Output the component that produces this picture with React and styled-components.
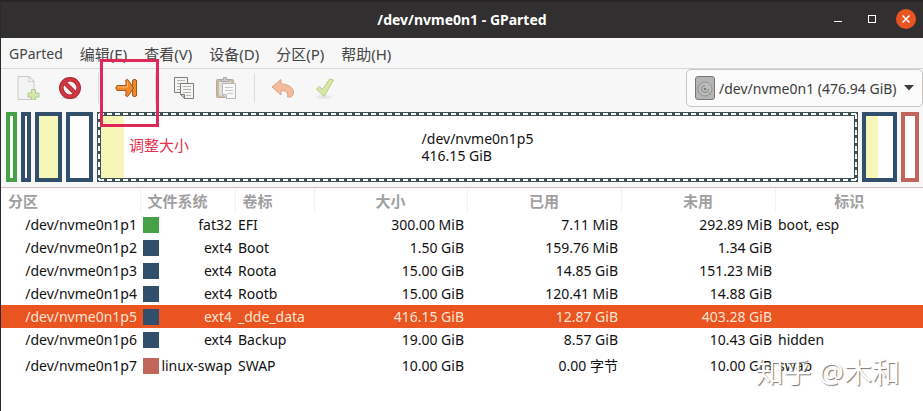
import React, { useState } from 'react';
import styled, { createGlobalStyle } from 'styled-components';

const GlobalStyle = createGlobalStyle`
  * {
    box-sizing: border-box;
  }

  body {
    margin: 0;
    background: #fff;
    color: #111;
    font-family: 'Noto Sans', 'Noto Sans CJK SC', sans-serif;
    font-size: 14px;
  }

  button, select {
    font: inherit;
    color: inherit;
    border: none;
    background: none;
    padding: 0;
  }
`;

// Styled Components
const Window = styled.div`
  min-height: 100vh;
  border-left: 1px solid #2b2a2a;
  overflow: hidden;
`;

const TitleBar = styled.header`
  display: grid;
  grid-template-columns: 1fr auto 1fr;
  align-items: center;
  height: 38px;
  background: #312f30;
  box-shadow: inset 0 2px #262425;
`;

const Title = styled.h1`
  grid-column: 2;
  margin: 0;
  font-size: 14px;
  font-weight: 700;
  color: #fff;
`;

const WindowControls = styled.div`
  display: flex;
  justify-content: flex-end;
  gap: 14px;
  padding-right: 7px;
`;

const ControlButton = styled.button`
  display: flex;
  align-items: center;
  justify-content: center;
  width: 20px;
  height: 20px;
  border-radius: 50%;
  background: ${(props) => (props.$close ? '#e95420' : 'transparent')};
`;

const MenuBar = styled.nav`
  display: flex;
  align-items: center;
  gap: 17px;
  height: 31px;
  padding: 2px 8px 0;
  background: #f7f7f7;
  border-bottom: 1px solid #d9d8d8;
`;

const MenuItem = styled.button`
  font-size: ${(props) => (props.$latin ? 14 : 15)}px;
  line-height: 24px;
  color: #454545;
`;

const Toolbar = styled.div`
  display: flex;
  align-items: center;
  gap: 2px;
  height: 38px;
  padding-left: 7px;
  background: #f7f7f7;
`;

const ToolButton = styled.button`
  position: relative;
  display: flex;
  align-items: center;
  justify-content: center;
  width: 40px;
  height: 36px;

  &:disabled svg {
    opacity: 0.55;
  }
`;

const ToolSeparator = styled.span`
  width: 1px;
  height: 30px;
  margin: 0 6px;
  background: #dedddd;
`;

const Highlight = styled.span`
  position: absolute;
  top: -11px;
  left: -7px;
  z-index: 1;
  width: 59px;
  height: 68px;
  border: 3px solid #e02858;
  pointer-events: none;
`;

const DevicePicker = styled.label`
  display: flex;
  align-items: center;
  gap: 4px;
  height: 38px;
  margin-left: auto;
  padding: 0 8px;
  border: 1px solid #c8c5c3;
  border-radius: 5px;
  background: #fbfbfb;
`;

const DeviceSelect = styled.select`
  appearance: none;
  width: 181px;
  font-size: 14px;
  color: #3d3d3d;
`;

const DiskMap = styled.div`
  display: flex;
  gap: 4px;
  height: 81px;
  padding: 5px 4px 5px 5px;
  background: #f7f7f7;
  border-bottom: 1px solid #cdbfc4;
`;

const Block = styled.div`
  position: relative;
  display: flex;
  flex: ${(props) => props.$weight} 1 0;
  min-width: 0;
  border: 4px solid ${(props) => props.$color};
  background: #fff;
`;

const Used = styled.div`
  height: 100%;
  background: #f6f6b8;
`;

const SelectionDashes = styled.svg`
  position: absolute;
  top: -4px;
  left: -4px;
  width: calc(100% + 8px);
  height: calc(100% + 8px);
`;

const BlockLabel = styled.div`
  position: absolute;
  inset: 0;
  display: flex;
  align-items: center;
  justify-content: center;
  font-size: 14px;
  line-height: 17px;
`;

const Note = styled.span`
  position: absolute;
  top: 18px;
  left: 28px;
  font-size: 15px;
  line-height: 22px;
  color: #e5304f;
`;

const PartitionTable = styled.table`
  width: 100%;
  table-layout: fixed;
  border-collapse: collapse;
`;

const HeadCell = styled.th`
  height: 25px;
  padding: 0 7px;
  border-right: 1px solid #f3f1f1;
  font-size: 15px;
  font-weight: 700;
  line-height: 22px;
  text-align: ${(props) => props.$align || 'left'};
  color: #a09f9f;

  &:last-child {
    border-right: none;
  }
`;

const Row = styled.tr`
  height: ${(props) => (props.$tall ? 30 : 23)}px;
  background: ${(props) => (props.$selected ? '#e95420' : '#fff')};
  color: ${(props) => (props.$selected ? '#fde3d5' : '#111')};
`;

const Cell = styled.td`
  padding: 0 3px;
  line-height: 22px;
  text-align: ${(props) => props.$align || 'left'};
  white-space: nowrap;
`;

const FileSystem = styled.div`
  display: flex;
  align-items: center;
  justify-content: space-between;
`;

const Swatch = styled.span`
  width: 16px;
  height: 16px;
  background: ${(props) => props.$color};
`;

const Watermark = styled.div`
  position: absolute;
  top: 350px;
  right: 23px;
  font-size: 28px;
  line-height: 44px;
  color: #fff;
  text-shadow: 1px 1px 1px #7a7a7a;
  pointer-events: none;
`;

const COLORS = { fat32: '#46a046', ext4: '#314e6c', 'linux-swap': '#c1665a' };

const partitions = [
  { name: '/dev/nvme0n1p1', fs: 'fat32', label: 'EFI', size: '300.00 MiB', used: '7.11 MiB', unused: '292.89 MiB', flags: 'boot, esp', weight: 3, fill: 0 },
  { name: '/dev/nvme0n1p2', fs: 'ext4', label: 'Boot', size: '1.50 GiB', used: '159.76 MiB', unused: '1.34 GiB', flags: '', weight: 2, fill: 0 },
  { name: '/dev/nvme0n1p3', fs: 'ext4', label: 'Roota', size: '15.00 GiB', used: '14.85 GiB', unused: '151.23 MiB', flags: '', weight: 19, fill: 99 },
  { name: '/dev/nvme0n1p4', fs: 'ext4', label: 'Rootb', size: '15.00 GiB', used: '120.41 MiB', unused: '14.88 GiB', flags: '', weight: 19, fill: 0 },
  { name: '/dev/nvme0n1p5', fs: 'ext4', label: '_dde_data', size: '416.15 GiB', used: '12.87 GiB', unused: '403.28 GiB', flags: '', weight: 753, fill: 3 },
  { name: '/dev/nvme0n1p6', fs: 'ext4', label: 'Backup', size: '19.00 GiB', used: '8.57 GiB', unused: '10.43 GiB', flags: 'hidden', weight: 27, fill: 45 },
  { name: '/dev/nvme0n1p7', fs: 'linux-swap', label: 'SWAP', size: '10.00 GiB', used: '0.00 字节', unused: '10.00 GiB', flags: 'swap', weight: 10, fill: 0 },
];

const menus = ['GParted', '编辑(E)', '查看(V)', '设备(D)', '分区(P)', '帮助(H)'];

const NewIcon = () => (
  <svg width="24" height="24" viewBox="0 0 24 24">
    <path d="M2 .5h11l5 5v18H2z" fill="#f1f1f0" stroke="#a5a7a2" />
    <path d="M13 .5q1 3-.5 5.500 3-1 5.500-.5z" fill="#fff" stroke="#a5a7a2" />
    <path d="M15.500 13.500h4v3.500h3.500v4h-3.500v3h-4v-3H12v-4h3.500z" fill="#b5dc72" stroke="#7ba03a" />
  </svg>
);

const DeleteIcon = () => (
  <svg width="24" height="24" viewBox="0 0 24 24">
    <ellipse cx="12" cy="22" rx="9" ry="1.500" fill="#ddd" />
    <circle cx="12" cy="12" r="8.700" fill="#f5eeee" stroke="#a8202a" strokeWidth="4.500" />
    <path d="M6 6l12 12" stroke="#a8202a" strokeWidth="4.500" />
    <circle cx="12" cy="12" r="8.700" fill="none" stroke="#cf3a42" strokeWidth="2.800" />
    <path d="M6 6l12 12" stroke="#cf3a42" strokeWidth="2.800" />
  </svg>
);

const ResizeIcon = () => (
  <svg width="24" height="24" viewBox="0 0 24 24">
    <rect x="17.500" y="3.500" width="4" height="17" rx="1.500" fill="#ee8a30" stroke="#a8551c" />
    <path
      d="M2 9.500h9V6q-1.200-2 .8-2.500 1.200 0 2 1.200L18.500 12l-4.700 7.300q-.8 1.200-2 1.200-2-.5-.8-2.500v-3.500H2Q-.5 12 2 9.500z"
      fill="#ee8a30"
      stroke="#a8551c"
      strokeLinejoin="round"
    />
    <path d="M2.500 11h10V6" fill="none" stroke="#fbb570" />
  </svg>
);

const CopyIcon = () => (
  <svg width="24" height="24" viewBox="0 0 24 24">
    <path d="M2.500 1.500h13v15h-13z" fill="#f4f4f3" stroke="#7c7e7a" />
    <path d="M5 4.500h8M5 7.500h8M5 10.500h4M5 13.500h3" stroke="#b3b5b0" />
    <path d="M8.500 7.500h13v15h-9l-4-4z" fill="#f4f4f3" stroke="#7c7e7a" />
    <path d="M11 10.500h8M11 13.500h8M11 16.500h8M14 19.500h5" stroke="#b3b5b0" />
    <path d="M8.500 18.500h4v4z" fill="#ccc" stroke="#7c7e7a" />
  </svg>
);

const PasteIcon = () => (
  <svg width="24" height="24" viewBox="0 0 24 24">
    <rect x="2.500" y="3.500" width="17" height="18" rx="1" fill="#a58a60" stroke="#7f6e50" />
    <path d="M5 5.500h12v14H5z" fill="#d2cfc6" />
    <path d="M7 5.500v-2h2.500v-2h3v2H15v2z" fill="#a9aaa7" stroke="#666" />
    <path d="M8.500 7.500h13v15h-9l-4-4z" fill="#fafaf9" stroke="#85877f" />
    <path d="M11 11.500h8M11 14.500h8M13 17.500h6" stroke="#a3a5a0" />
    <path d="M8.500 18.500h4v4z" fill="#ccc" stroke="#85877f" />
  </svg>
);

const UndoIcon = () => (
  <svg width="24" height="24" viewBox="0 0 24 24">
    <path d="M1 11l9-7.500v4.500C17 8 21.500 11 22.500 15.500q.5 3.500-2.500 5.500h-3.500C17.500 16.500 15 14.500 10 14.500V19z" fill="#f08c50" stroke="#c5602c" strokeLinejoin="round" />
  </svg>
);

const ApplyIcon = () => (
  <svg width="24" height="24" viewBox="0 0 24 24">
    <ellipse cx="11" cy="21" rx="8" ry="2" fill="#ddd" />
    <path d="M3.500 13l3-2.500 3 3L16.500 3l4 1L11 20.500z" fill="#bfdc62" stroke="#87a53c" strokeLinejoin="round" />
  </svg>
);

const DiskIcon = () => (
  <svg width="20" height="24" viewBox="0 0 20 24">
    <rect x=".5" y=".5" width="19" height="23" rx="2.500" fill="#b5b5b4" stroke="#777" />
    <circle cx="10" cy="13" r="7" fill="#bdbdbc" stroke="#929292" />
    <path d="M10 9.500a3.500 3.500 0 1 0 3.500 3.500" fill="none" stroke="#858585" />
    <circle cx="10" cy="13" r="1.200" fill="#777" />
    <path d="M12 15l4 4" stroke="#999" />
  </svg>
);

const DiskBlock = ({ partition, selected }) => (
  <Block $weight={partition.weight} $color={COLORS[partition.fs]}>
    <Used style={{ width: `${partition.fill}%` }} />
    {selected && (
      <>
        <SelectionDashes>
          <rect x="0" y="0" width="100%" height="100%" fill="none" stroke="#3d5055" strokeWidth="8" />
          <line x1="2" y1="2" x2="100%" y2="2" stroke="#fff" strokeWidth="2" strokeDasharray="5 3" />
          <line x1="2" y1="68" x2="100%" y2="68" stroke="#fff" strokeWidth="2" strokeDasharray="5 3" />
          <line x1="2" y1="2" x2="2" y2="68" stroke="#fff" strokeWidth="2" strokeDasharray="5 3" />
          <svg x="100%" overflow="visible">
            <line x1="-2" y1="2" x2="-2" y2="68" stroke="#fff" strokeWidth="2" strokeDasharray="5 3" />
          </svg>
        </SelectionDashes>
        <BlockLabel>
          <div>
            {partition.name}
            <br />
            {partition.size}
          </div>
        </BlockLabel>
        <Note>调整大小</Note>
      </>
    )}
  </Block>
);

const App = () => {
  const [selected, setSelected] = useState('/dev/nvme0n1p5');

  return (
    <Window>
      <GlobalStyle />
      <TitleBar>
        <Title>/dev/nvme0n1 - GParted</Title>
        <WindowControls>
          <ControlButton aria-label="Minimize">
            <svg width="10" height="10"><path d="M1 7.500h8" stroke="#fff" /></svg>
          </ControlButton>
          <ControlButton aria-label="Maximize">
            <svg width="10" height="10"><rect x="1.500" y="1.500" width="7" height="7" fill="none" stroke="#fff" /></svg>
          </ControlButton>
          <ControlButton $close aria-label="Close">
            <svg width="10" height="10"><path d="M1.500 1.500l7 7M8.500 1.500l-7 7" stroke="#fff" strokeWidth="1.500" /></svg>
          </ControlButton>
        </WindowControls>
      </TitleBar>

      <MenuBar>
        {menus.map((menu) => (
          <MenuItem key={menu} $latin={menu === 'GParted'}>{menu}</MenuItem>
        ))}
      </MenuBar>

      <Toolbar>
        <ToolButton disabled aria-label="New"><NewIcon /></ToolButton>
        <ToolButton aria-label="Delete"><DeleteIcon /></ToolButton>
        <ToolSeparator />
        <ToolButton aria-label="Resize/Move">
          <ResizeIcon />
          <Highlight />
        </ToolButton>
        <ToolSeparator />
        <ToolButton aria-label="Copy"><CopyIcon /></ToolButton>
        <ToolButton disabled aria-label="Paste"><PasteIcon /></ToolButton>
        <ToolSeparator />
        <ToolButton disabled aria-label="Undo"><UndoIcon /></ToolButton>
        <ToolButton disabled aria-label="Apply"><ApplyIcon /></ToolButton>
        <DevicePicker>
          <DiskIcon />
          <DeviceSelect aria-label="Device">
            <option>/dev/nvme0n1 (476.94 GiB)</option>
          </DeviceSelect>
          <svg width="10" height="6"><path d="M0 0h10L5 5.500z" fill="#3d3d3d" /></svg>
        </DevicePicker>
      </Toolbar>

      <DiskMap>
        {partitions.map((partition) => (
          <DiskBlock key={partition.name} partition={partition} selected={partition.name === selected} />
        ))}
      </DiskMap>

      <PartitionTable>
        <colgroup>
          <col width="139" />
          <col width="95" />
          <col width="79" />
          <col width="153" />
          <col width="154" />
          <col width="154" />
          <col />
        </colgroup>
        <thead>
          <tr>
            <HeadCell>分区</HeadCell>
            <HeadCell>文件系统</HeadCell>
            <HeadCell>卷标</HeadCell>
            <HeadCell $align="center">大小</HeadCell>
            <HeadCell $align="center">已用</HeadCell>
            <HeadCell $align="center">未用</HeadCell>
            <HeadCell $align="center">标识</HeadCell>
          </tr>
        </thead>
        <tbody>
          {partitions.map((p) => (
            <Row
              key={p.name}
              $tall={p.fs === 'linux-swap'}
              $selected={p.name === selected}
              onClick={() => setSelected(p.name)}
            >
              <Cell $align="right">{p.name}</Cell>
              <Cell>
                <FileSystem>
                  <Swatch $color={COLORS[p.fs]} />
                  {p.fs}
                </FileSystem>
              </Cell>
              <Cell>{p.label}</Cell>
              <Cell $align="right">{p.size}</Cell>
              <Cell $align="right">{p.used}</Cell>
              <Cell $align="right">{p.unused}</Cell>
              <Cell>{p.flags}</Cell>
            </Row>
          ))}
        </tbody>
      </PartitionTable>
      <Watermark>知乎 @木和</Watermark>
    </Window>
  );
};

export default App;
